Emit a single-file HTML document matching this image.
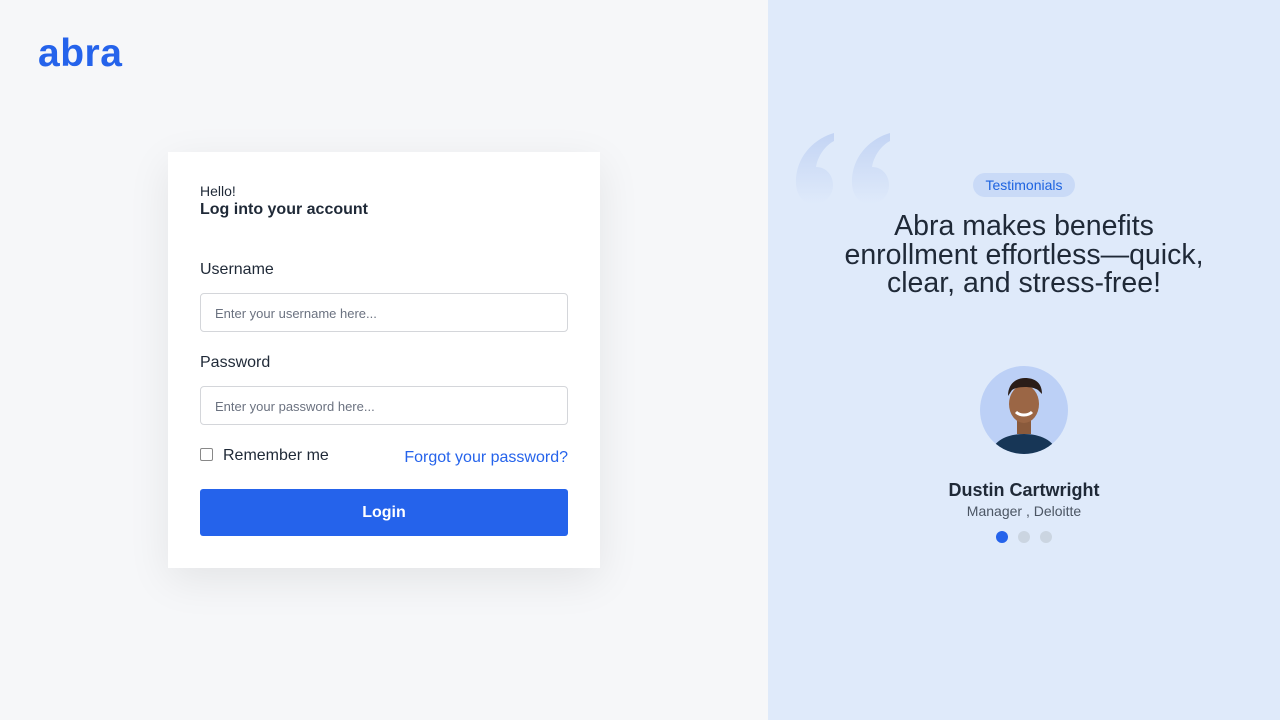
<!DOCTYPE html>
<html><head><style>
*{box-sizing:border-box;margin:0;padding:0}
body{width:1280px;height:720px;overflow:hidden;font-family:"Liberation Sans",sans-serif;background:#f6f7f9;position:relative;color:#1f2937}
.abs{position:absolute}
.logo{left:38px;top:32px;font-size:39px;font-weight:bold;color:#2563eb;letter-spacing:0.5px}
.card{left:168px;top:152px;width:432px;height:416px;background:#fff;box-shadow:0 12px 40px rgba(0,0,0,0.08)}
.in{left:200px;width:368px;height:39px;border:1px solid #d4d6da;border-radius:4px;font-size:13px;color:#6b7280;padding:12px 14px}
.lbl{left:200px;font-size:16px;color:#1f2937}
.right{left:768px;top:0;width:512px;height:720px;background:#dfeafa}
</style></head><body>
<div class="abs logo">abra</div>
<div class="abs card"></div>
<div class="abs" style="left:200px;top:183px;font-size:14px">Hello!</div>
<div class="abs" style="left:200px;top:201px;font-size:16px;font-weight:bold">Log into your account</div>
<div class="abs lbl" style="top:261px">Username</div>
<div class="abs in" style="top:293px">Enter your username here...</div>
<div class="abs lbl" style="top:354px">Password</div>
<div class="abs in" style="top:386px">Enter your password here...</div>
<div class="abs" style="left:200px;top:448px;width:13px;height:13px;border:1px solid #888;border-radius:2px"></div>
<div class="abs" style="left:223px;top:447px;font-size:16px">Remember me</div>
<div class="abs" style="left:368px;width:200px;text-align:right;top:449px;font-size:16px;color:#2563eb">Forgot your password?</div>
<div class="abs" style="left:200px;top:489px;width:368px;height:47px;background:#2563eb;border-radius:3px;color:#fff;font-weight:bold;font-size:16px;text-align:center;line-height:47px">Login</div>
<div class="abs right"></div>
<svg class="abs" style="left:794px;top:132px" width="102" height="74" viewBox="0 0 102 74">
<defs><linearGradient id="g" x1="0" y1="0" x2="0" y2="1"><stop offset="0" stop-color="#c3d4f4"/><stop offset="1" stop-color="#dfeafa"/></linearGradient></defs>
<path d="M40 1C22 6 4 22 2 46c-1 16 6 26 18 26 11 0 19-8 19-19 0-10-7-18-17-18 2-12 10-22 18-26z" fill="url(#g)"/>
<path d="M96 1C78 6 60 22 58 46c-1 16 6 26 18 26 11 0 19-8 19-19 0-10-7-18-17-18 2-12 10-22 18-26z" fill="url(#g)"/>
</svg>
<div class="abs" style="left:973px;top:173px;width:102px;height:24px;border-radius:12px;background:#c9daf7;color:#1d63e0;font-size:14px;text-align:center;line-height:24px">Testimonials</div>
<div class="abs" style="left:774px;top:212px;width:500px;text-align:center;font-size:28.5px;line-height:28.5px;color:#1f2937;white-space:nowrap">Abra makes benefits<br>enrollment effortless—quick,<br>clear, and stress-free!</div>
<svg class="abs" style="left:980px;top:366px" width="88" height="88" viewBox="0 0 88 88">
<clipPath id="c"><circle cx="44" cy="44" r="44"/></clipPath>
<circle cx="44" cy="44" r="44" fill="#bcd0f6"/>
<g clip-path="url(#c)">
<path d="M10 88c4-14 18-20 34-20s30 6 34 20z" fill="#173656"/>
<rect x="37" y="52" width="14" height="16" fill="#8a5a3c"/>
<ellipse cx="44" cy="38" rx="15" ry="19" fill="#9b6645"/>
<path d="M28 30c0-14 10-18 17-18 9 0 17 4 17 16l-4-4c-6-4-20-4-26 0z" fill="#2a1d18"/>
<path d="M36 46c4 4 12 4 16 0" stroke="#fff" stroke-width="3" fill="none"/>
</g></svg>
<div class="abs" style="left:900px;top:480px;width:248px;text-align:center;font-size:18px;font-weight:bold">Dustin Cartwright</div>
<div class="abs" style="left:900px;top:503px;width:248px;text-align:center;font-size:14px;color:#4b5563">Manager , Deloitte</div>
<div class="abs" style="left:996px;top:531px;width:12px;height:12px;border-radius:50%;background:#2563eb"></div>
<div class="abs" style="left:1018px;top:531px;width:12px;height:12px;border-radius:50%;background:#cbd5e1"></div>
<div class="abs" style="left:1040px;top:531px;width:12px;height:12px;border-radius:50%;background:#cbd5e1"></div>
</body></html>
